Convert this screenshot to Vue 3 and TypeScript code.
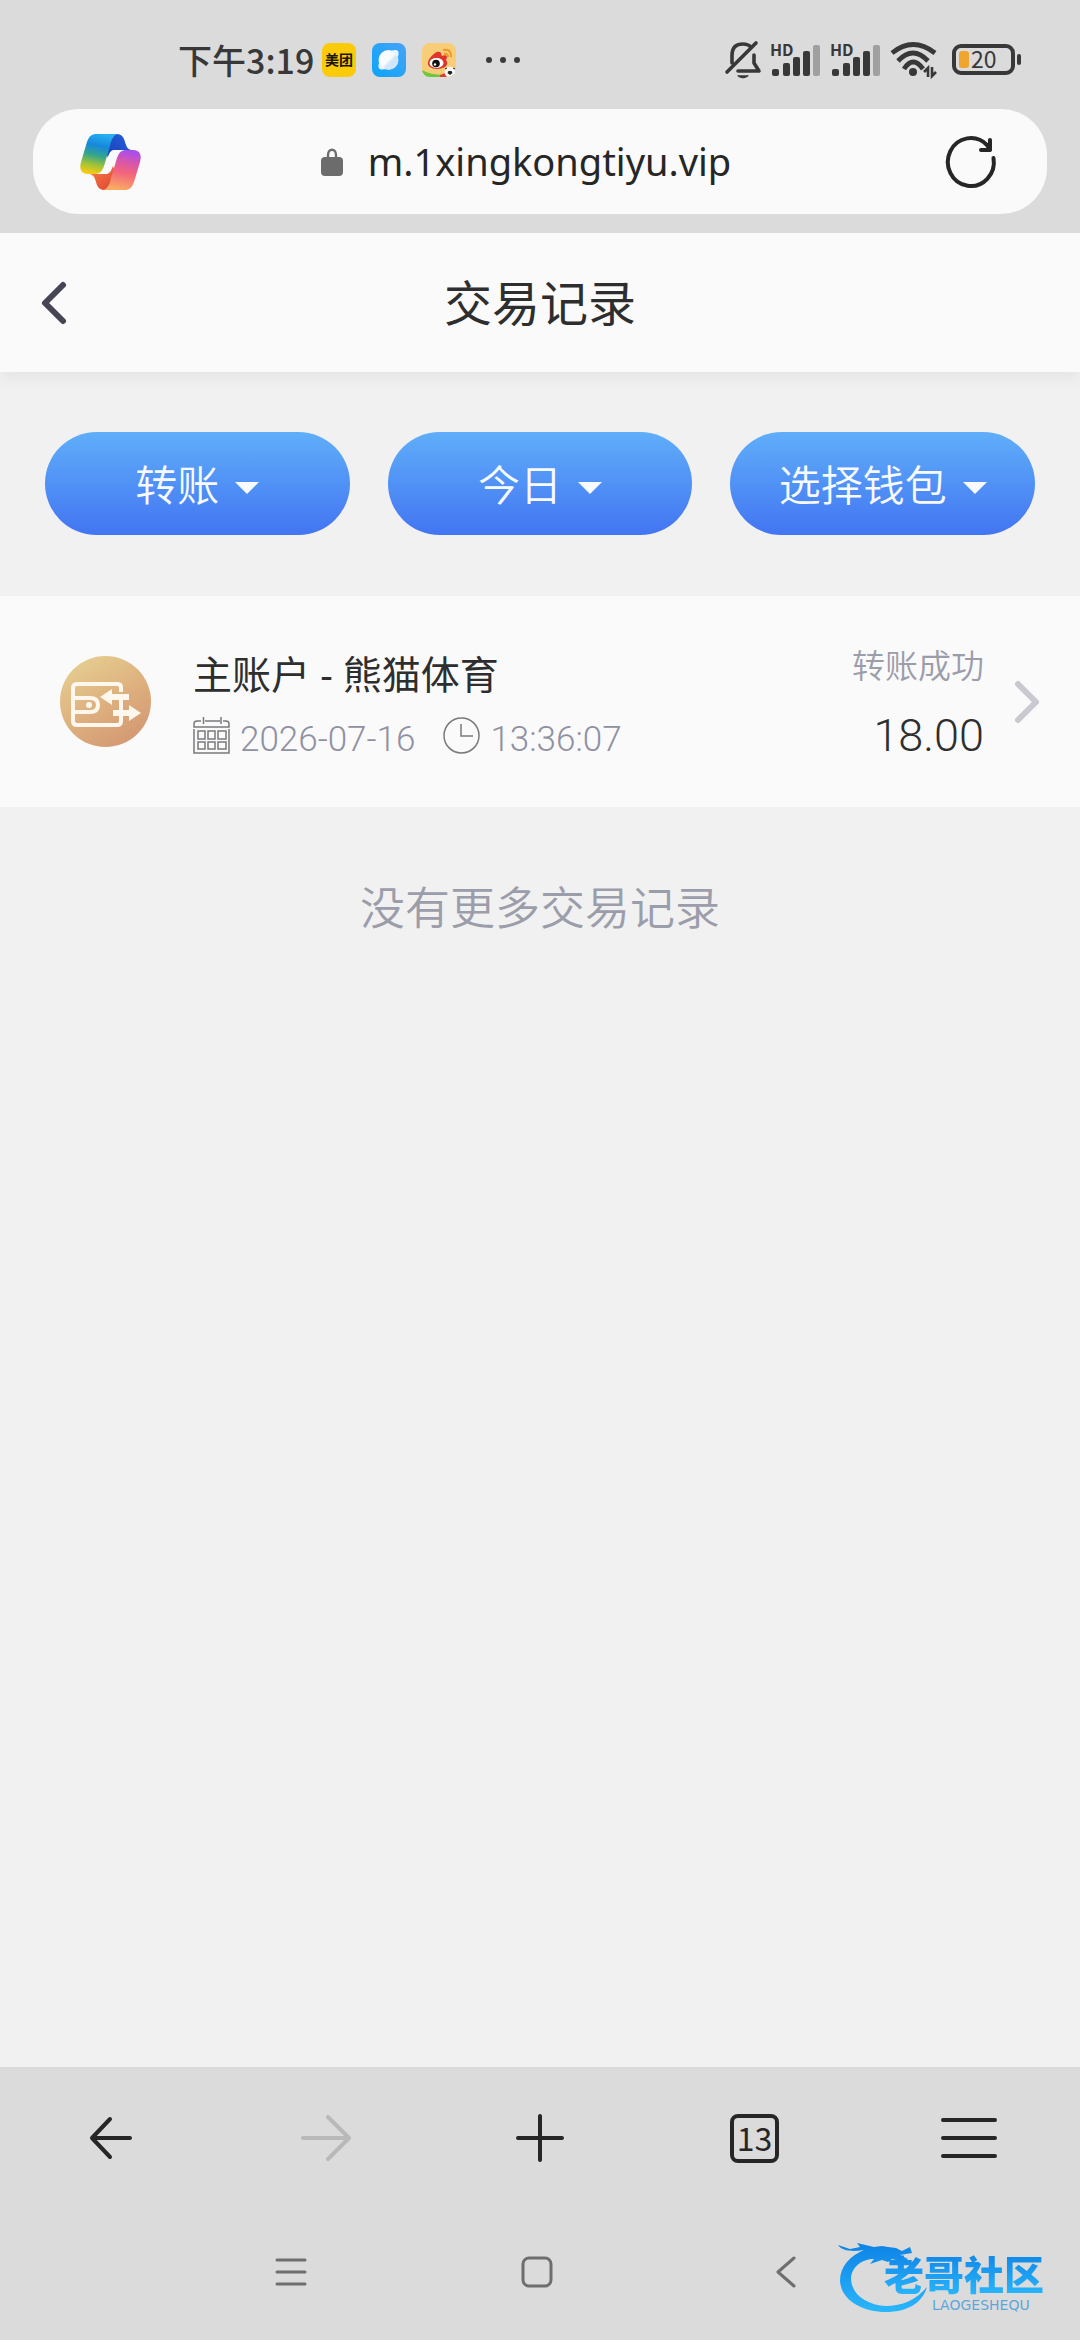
<script setup lang="ts">
import { ref } from 'vue'

interface Filter {
  id: string
  label: string
  options: string[]
  value: string
}

interface RecordItem {
  id: number
  title: string
  date: string
  time: string
  status: string
  amount: string
}

const address = ref('m.1xingkongtiyu.vip')
const tabCount = ref(13)

const filters = ref<Filter[]>([
  { id: 'type', label: '交易类型', options: ['转账', '存款', '取款'], value: '转账' },
  { id: 'day', label: '日期', options: ['今日', '昨日'], value: '今日' },
  { id: 'wallet', label: '钱包', options: ['选择钱包', '主账户'], value: '选择钱包' },
])

const records: RecordItem[] = [
  { id: 1, title: '主账户 - 熊猫体育', date: '2026-07-16', time: '13:36:07', status: '转账成功', amount: '18.00' },
]

const bars = [
  { x: 0, h: 7 },
  { x: 11, h: 13 },
  { x: 21, h: 19 },
  { x: 31, h: 25 },
  { x: 41, h: 31 },
]
</script>

<template>
  <div class="screen">
    <div class="status-bar">
      <div class="status-left">
        <span class="clock">下午3:19</span>
        <svg class="app-icon" viewBox="0 0 34 34">
          <rect width="34" height="34" rx="8" fill="#fbcb0a" />
          <text x="17" y="22" text-anchor="middle" font-size="14" font-weight="700" fill="#1a1505">美团</text>
        </svg>
        <svg class="app-icon" viewBox="0 0 34 34">
          <defs>
            <linearGradient id="qb" x1="1" y1="0" x2="0" y2="1">
              <stop offset="0" stop-color="#47a3f8" />
              <stop offset="1" stop-color="#0aa5f8" />
            </linearGradient>
            <linearGradient id="qbw" x1="0" y1="0" x2="1" y2="1">
              <stop offset="0.5" stop-color="#f9fcff" />
              <stop offset="0.6" stop-color="#d3e5f8" />
            </linearGradient>
          </defs>
          <rect width="34" height="34" rx="8" fill="url(#qb)" />
          <circle cx="16.500" cy="17" r="10" fill="url(#qbw)" />
          <path d="M7 20C5 27 9 27 14 26ZM19 8C25 6 28 7 26 14Z" fill="#eaf4ff" />
        </svg>
        <svg class="app-icon" viewBox="0 0 34 34">
          <defs><clipPath id="wb"><rect width="34" height="34" rx="8" /></clipPath></defs>
          <g clip-path="url(#wb)">
            <rect width="34" height="34" fill="#f8cd77" />
            <path d="M0 27Q12 34 34 31V34H0Z" fill="#6fc83c" />
            <path d="M18 32l8-3v5h-8z" fill="#d8402f" />
            <path d="M15 9C20 8 19 12 20 13C25 11 26 14 24 17C28 22 22 26 15 26C9 26 5 23 6 19C7 15 12 10 15 9Z" fill="#e0342c" />
            <ellipse cx="14.500" cy="20" rx="7" ry="5" fill="#fff" />
            <circle cx="14" cy="20.500" r="3.800" fill="#111" />
            <circle cx="13" cy="21.500" r="1.200" fill="#fff" />
            <path d="M21 7Q29 5 29 14M22 11Q26 10 26 14" fill="none" stroke="#ee982b" stroke-width="2" />
            <circle cx="28" cy="29" r="5.500" fill="#f7f7f7" />
            <path d="M26.500 28h3l1 2-2.500 2-2.500-2z" fill="#222" />
            <path d="M23 26l2-1M31 25l2 1" stroke="#222" />
          </g>
        </svg>
        <svg class="more" viewBox="0 0 34 8" fill="#3c3c3c">
          <circle cx="3" cy="4" r="3" /><circle cx="17" cy="4" r="3" /><circle cx="31" cy="4" r="3" />
        </svg>
      </div>
      <div class="status-right">
        <svg class="bell" viewBox="0 0 36 38" fill="none" stroke="#383838" stroke-width="3.600" stroke-linecap="round" stroke-linejoin="round">
          <path d="M7 22V15C7 6 11 3 18 3C21 3 24 4 26 6M29 14V22L34 30H13M2 31L31 2" />
          <path d="M13 35Q18 39 23 35Z" fill="#383838" stroke-width="1" />
        </svg>
        <svg v-for="n in 2" :key="n" class="signal" viewBox="0 0 52 36">
          <text x="0" y="14" font-size="16" font-weight="700" fill="#383838">HD</text>
          <rect v-for="(b, i) in bars" :key="b.x" :x="b.x + 2" :y="34 - b.h" width="7" :height="b.h" rx="2" :fill="i === 4 ? '#a0a0a0' : '#383838'" />
        </svg>
        <svg class="wifi" viewBox="0 0 48 38" fill="none" stroke="#383838" stroke-width="4.800">
          <path d="M2 12Q23 -5 45 12M8 20Q23 4 38 20M14 28Q23 14 33 28" />
          <circle cx="23" cy="31" r="4" fill="#383838" stroke="none" />
          <path d="M38 36V27L34 31M42 26V35L46 31" stroke-width="2.600" />
        </svg>
        <svg class="battery" viewBox="0 0 70 32">
          <rect x="2" y="2" width="59" height="27" rx="7" fill="none" stroke="#383838" stroke-width="4" />
          <rect x="65" y="10" width="4" height="11" rx="2" fill="#383838" />
          <rect x="7" y="7" width="10" height="17" rx="3" fill="#efa52e" />
          <text x="19" y="24" font-size="23" fill="#383838">20</text>
        </svg>
      </div>
    </div>

    <div class="address-wrap">
      <div class="address-bar">
        <button class="icon-button" aria-label="Copilot">
          <svg class="copilot" viewBox="0 0 61 56">
            <defs>
              <linearGradient id="cpa" x1="0.600" y1="0" x2="0.400" y2="1">
                <stop offset="0" stop-color="#27b0ee" />
                <stop offset="0.300" stop-color="#1688dc" />
                <stop offset="0.550" stop-color="#35a58c" />
                <stop offset="0.780" stop-color="#9cc239" />
                <stop offset="1" stop-color="#f6cb13" />
              </linearGradient>
              <linearGradient id="cpb" x1="0.400" y1="1" x2="0.600" y2="0">
                <stop offset="0" stop-color="#fbac62" />
                <stop offset="0.450" stop-color="#f2647c" />
                <stop offset="0.700" stop-color="#d957a8" />
                <stop offset="1" stop-color="#a94df0" />
              </linearGradient>
              <linearGradient id="cpc" x1="0" y1="1" x2="1" y2="0">
                <stop offset="0" stop-color="#1a3db4" /><stop offset="1" stop-color="#2462de" />
              </linearGradient>
              <linearGradient id="cpd" x1="0" y1="0" x2="1" y2="1">
                <stop offset="0" stop-color="#f9803f" /><stop offset="1" stop-color="#dd4338" />
              </linearGradient>
            </defs>
            <path d="M30 0H37C42 0 44 4 45 8L46 11C47 14 49 16 53 16H36C31 16 30 19 28 24L24 12Z" fill="url(#cpc)" />
            <path d="M31 56H24C19 56 17 52 16 48L15 45C14 42 12 40 8 40H25C30 40 31 37 33 32L37 44Z" fill="url(#cpd)" />
            <path d="M16 0H38C33 1 31 7 30 12L24 32C22 38 19 40 15 40H8C1 40-1 35 1 28L7 8C9 2 12 0 16 0Z" fill="url(#cpa)" />
            <path d="M45 56H23C28 55 30 49 31 44L37 24C39 18 42 16 46 16H53C60 16 62 21 60 28L54 48C52 54 49 56 45 56Z" fill="url(#cpb)" />
            <path d="M34 16H39C36 18 35 20 34 24L31 34C30 38 28 40 25 40H21C23 39 24 36 25 33L28 23C29 19 31 16 34 16Z" fill="#fafafa" />
          </svg>
        </button>
        <label class="address">
          <svg class="lock" viewBox="0 0 22 28">
            <path d="M7 11V7C7 0 15 0 15 7V11" fill="none" stroke="#6c6c6c" stroke-width="2.400" />
            <rect y="9" width="22" height="19" rx="4" fill="#6c6c6c" />
          </svg>
          <input v-model="address" class="address-input" type="text" aria-label="网址" />
        </label>
        <button class="icon-button" aria-label="刷新">
          <svg class="reload" viewBox="0 0 52 52" fill="none" stroke="#262626" stroke-width="4" stroke-linecap="round" stroke-linejoin="round">
            <path d="M48.500 22A23 24 0 1 1 42 9L45 14M45 4V14H36" />
          </svg>
        </button>
      </div>
    </div>

    <header class="page-header">
      <button class="back icon-button" aria-label="返回">
        <svg viewBox="0 0 26 44" fill="none" stroke="#464553" stroke-width="6" stroke-linecap="round" stroke-linejoin="round">
          <path d="M22 4L4 22L22 40" />
        </svg>
      </button>
      <h1>交易记录</h1>
    </header>

    <main class="content">
      <div class="filters">
        <label v-for="f in filters" :key="f.id" class="pill">
          <select v-model="f.value" :aria-label="f.label">
            <option v-for="o in f.options" :key="o" :value="o">{{ o }}</option>
          </select>
          <svg class="caret" viewBox="0 0 24 12"><path d="M0 0H24L12 12Z" fill="#f7faff" /></svg>
        </label>
      </div>

      <ul class="records">
        <li v-for="r in records" :key="r.id">
          <a class="record" href="#record">
            <svg class="wallet" viewBox="0 0 91 91">
              <defs>
                <linearGradient id="wl" x1="0.200" y1="0" x2="0.800" y2="1">
                  <stop offset="0" stop-color="#e5cf92" />
                  <stop offset="0.500" stop-color="#deb17e" />
                  <stop offset="1" stop-color="#d29672" />
                </linearGradient>
              </defs>
              <circle cx="45.500" cy="45.500" r="45.500" fill="url(#wl)" />
              <g fill="none" stroke="#fdf7ee" stroke-width="4" stroke-linejoin="round">
                <path d="M61 36V31Q61 28 57 28H17Q13 28 13 32V65Q13 69 17 69H57Q61 69 61 65V44" />
                <path d="M13 42H30Q38 42 38 49T30 56H13" />
              </g>
              <circle cx="29" cy="49" r="3" fill="#fdf7ee" />
              <path d="M40 41L52 33V38H69V44H52V49ZM81 57L69 49V54H53V60H69V65Z" fill="#fdf7ee" />
            </svg>
            <div class="record-main">
              <span class="record-title">{{ r.title }}</span>
              <span class="record-meta">
                <svg class="meta-icon" viewBox="0 0 37 37" fill="none" stroke="#7a7a7e" stroke-width="1.500">
                  <path d="M8 4H4Q1 4 1 7V10H36V7Q36 4 33 4H30M12 4H27M10.500 0V7M28 0V7M1 12V36H36V12" />
                  <path d="M5 14H12V22H5ZM15 14H22V22H15ZM25 14H33V22H25ZM5 25H12V32H5ZM15 25H22V32H15ZM25 25H33V32H25Z" />
                </svg>
                <span class="date">{{ r.date }}</span>
                <svg class="meta-icon" viewBox="0 0 37 37" fill="none" stroke="#7a7a7e" stroke-width="1.500">
                  <circle cx="18.500" cy="18.500" r="17.500" /><path d="M18 7V19H30" />
                </svg>
                <span class="time">{{ r.time }}</span>
              </span>
            </div>
            <div class="record-side">
              <span class="record-status">{{ r.status }}</span>
              <span class="record-amount">{{ r.amount }}</span>
            </div>
            <svg class="chevron" viewBox="0 0 26 44" fill="none" stroke="#c9c9d2" stroke-width="6" stroke-linecap="round" stroke-linejoin="round">
              <path d="M4 4L22 22L4 40" />
            </svg>
          </a>
        </li>
      </ul>

      <p class="empty">没有更多交易记录</p>
    </main>

    <footer class="bottom">
      <nav class="toolbar">
        <button class="tool" aria-label="后退">
          <svg width="44" height="42" viewBox="0 0 44 42" fill="none" stroke="#262626" stroke-width="4" stroke-linecap="round" stroke-linejoin="round"><path d="M21 2L3 21L21 40M4 21H41" /></svg>
        </button>
        <button class="tool" aria-label="前进" disabled>
          <svg width="50" height="46" viewBox="0 0 50 46" fill="none" stroke="#b9b9b9" stroke-width="4" stroke-linecap="round" stroke-linejoin="round"><path d="M27 2L48 23L27 44M47 23H2" /></svg>
        </button>
        <button class="tool" aria-label="新标签页">
          <svg width="48" height="48" viewBox="0 0 48 48" stroke="#262626" stroke-width="4" stroke-linecap="round"><path d="M24 2V46M2 24H46" /></svg>
        </button>
        <button class="tool" aria-label="标签页"><span class="tabs">{{ tabCount }}</span></button>
        <button class="tool" aria-label="菜单">
          <svg width="56" height="40" viewBox="0 0 56 40" stroke="#262626" stroke-width="4" stroke-linecap="round"><path d="M2 2H54M2 20H54M2 38H54" /></svg>
        </button>
      </nav>
      <nav class="system-nav">
        <button class="sys" aria-label="最近任务">
          <svg width="32" height="32" viewBox="0 0 32 32" stroke="#6e6e6e" stroke-width="3" stroke-linecap="round"><path d="M2 4H30M2 16H30M2 28H30" /></svg>
        </button>
        <button class="sys" aria-label="主屏幕">
          <svg width="32" height="32" viewBox="0 0 32 32" fill="none" stroke="#6e6e6e" stroke-width="3"><rect x="2" y="2" width="28" height="28" rx="6" /></svg>
        </button>
        <button class="sys" aria-label="返回上一页">
          <svg width="32" height="32" viewBox="0 0 32 32" fill="none" stroke="#6e6e6e" stroke-width="3" stroke-linecap="round" stroke-linejoin="round"><path d="M27 2L11 16L27 30" /></svg>
        </button>
      </nav>
      <div class="watermark">
        <svg class="dragon" viewBox="0 0 92 72">
          <defs>
            <linearGradient id="dg" x1="0" y1="0" x2="0" y2="1">
              <stop offset="0" stop-color="#0d83e6" /><stop offset="1" stop-color="#2ab6fb" />
            </linearGradient>
          </defs>
          <path d="M26 8C12 14 2 24 2 39C3 58 24 70 48 70C68 70 84 62 89 45C78 58 64 64 48 64C28 63 13 52 13 36C14 24 25 17 36 17L32 22L44 18L50 20L54 17L66 20L70 17L62 13L74 11L72 5L64 9L58 6L50 5L44 4L36 5L19 1L22 5L12 7L0 3C4 9 14 10 26 8Z" fill="url(#dg)" />
        </svg>
        <div class="mark-text">
          <span class="mark-name">老哥社区</span>
          <span class="mark-latin">LAOGESHEQU</span>
        </div>
      </div>
    </footer>
  </div>
</template>

<style>
body {
  background: #dbdbdb;
}
</style>

<style scoped>
* {
  box-sizing: border-box;
}
.screen {
  min-height: 100vh;
  display: flex;
  flex-direction: column;
  background: #dbdbdb;
  color: #2e2e2e;
  font-family: "Noto Sans CJK SC", sans-serif;
}
svg {
  display: block;
  flex: none;
  overflow: visible;
}
button {
  border: 0;
  padding: 0;
  background: none;
  display: flex;
  align-items: center;
  justify-content: center;
}
.status-bar {
  height: 109px;
  padding: 10px 58px 0 178px;
  display: flex;
  justify-content: space-between;
  align-items: center;
}
.status-left {
  display: flex;
  align-items: center;
  gap: 16px;
}
.clock {
  font-size: 34px;
  font-weight: 500;
  line-height: 40px;
  color: #383838;
  margin-right: -8px;
}
.app-icon {
  width: 34px;
  height: 34px;
}
.more {
  width: 34px;
  height: 8px;
  margin-left: 14px;
}
.status-right {
  display: flex;
  align-items: center;
}
.bell {
  width: 36px;
  height: 38px;
  margin-right: 9px;
}
.signal {
  width: 52px;
  height: 36px;
  margin-right: 8px;
}
.wifi {
  width: 48px;
  height: 38px;
  margin-right: 14px;
}
.battery {
  width: 70px;
  height: 32px;
}
.address-wrap {
  padding: 0 33px 19px;
}
.address-bar {
  height: 105px;
  padding: 0 50px 0 47px;
  border-radius: 46px;
  background: #fafafa;
  display: flex;
  align-items: center;
}
.copilot {
  width: 61px;
  height: 56px;
}
.reload {
  width: 52px;
  height: 52px;
}
.address {
  flex: 1;
  padding-right: 34px;
  display: flex;
  align-items: center;
  justify-content: center;
  gap: 25px;
}
.lock {
  width: 22px;
  height: 28px;
}
.address-input {
  field-sizing: content;
  border: 0;
  padding: 0 0 2px;
  outline: 0;
  background: none;
  font-family: "Noto Sans", sans-serif;
  font-size: 38px;
  line-height: 54px;
  color: #262626;
}
.page-header {
  position: relative;
  height: 139px;
  padding: 0 40px;
  background: #fafafa;
  box-shadow: 0 6px 16px rgba(0, 0, 0, 0.06);
  clip-path: inset(0 0 -30px 0);
  display: grid;
  grid-template-columns: 1fr auto 1fr;
  align-items: center;
}
.back {
  justify-self: start;
}
.back svg {
  width: 28px;
  height: 44px;
}
h1 {
  margin: 0;
  padding-bottom: 6px;
  font-size: 48px;
  font-weight: 400;
  line-height: 64px;
}
.content {
  flex: 1;
  background: #f1f1f1;
}
.filters {
  display: grid;
  grid-template-columns: repeat(3, 1fr);
  gap: 38px;
  padding: 60px 45px 61px;
}
.pill {
  height: 103px;
  padding-bottom: 2px;
  border-radius: 52px;
  background: linear-gradient(#60aefa, #4275f2);
  display: flex;
  align-items: center;
  justify-content: center;
  gap: 16px;
}
.pill select {
  appearance: none;
  field-sizing: content;
  border: 0;
  padding: 0;
  background: none;
  color: #f7faff;
  font-family: inherit;
  font-size: 42px;
  font-weight: 350;
  line-height: 60px;
}
.caret {
  width: 24px;
  height: 12px;
  margin-top: 10px;
}
.records {
  list-style: none;
  margin: 0;
  padding: 0;
}
.record {
  height: 211px;
  padding: 0 40px 0 60px;
  background: #fafafa;
  color: inherit;
  text-decoration: none;
  display: flex;
  align-items: center;
}
.wallet {
  width: 91px;
  height: 91px;
}
.record-main {
  flex: 1;
  margin-left: 42px;
  padding-top: 6px;
  display: flex;
  flex-direction: column;
  gap: 10px;
}
.record-title {
  font-family: "Noto Sans", "Noto Sans CJK SC", sans-serif;
  font-size: 39px;
  line-height: 52px;
}
.record-meta {
  display: flex;
  align-items: center;
  gap: 10px;
  font-family: Roboto, sans-serif;
  font-size: 35px;
  font-weight: 300;
  line-height: 44px;
  color: #8f91a2;
}
.meta-icon {
  width: 37px;
  height: 37px;
}
.date,
.time {
  padding-top: 8px;
}
.date {
  margin-right: 18px;
}
.record-side {
  display: flex;
  flex-direction: column;
  align-items: flex-end;
  gap: 24px;
}
.record-status {
  font-size: 33px;
  font-weight: 350;
  line-height: 44px;
  color: #9c9daa;
}
.record-amount {
  font-family: Roboto, sans-serif;
  font-size: 45px;
  font-weight: 300;
  line-height: 52px;
}
.chevron {
  width: 26px;
  height: 44px;
  margin-left: 30px;
}
.empty {
  margin: 66px 0 0;
  text-align: center;
  font-size: 45px;
  font-weight: 350;
  line-height: 66px;
  color: #9c9daa;
}
.bottom {
  position: relative;
}
.toolbar {
  height: 142px;
  padding: 0 4px;
  display: grid;
  grid-template-columns: repeat(5, 1fr);
}
.tabs {
  width: 49px;
  height: 49px;
  padding-bottom: 2px;
  border: 4px solid #262626;
  border-radius: 8px;
  display: flex;
  align-items: center;
  justify-content: center;
  font-family: "Noto Sans CJK SC", sans-serif;
  font-size: 32px;
  line-height: 40px;
  color: #262626;
}
.system-nav {
  height: 131px;
  padding: 0 6px 6px 0;
  display: flex;
  align-items: center;
  justify-content: center;
  gap: 214px;
}
.watermark {
  position: absolute;
  right: 20px;
  bottom: 26px;
  display: flex;
}
.dragon {
  width: 92px;
  height: 72px;
}
.mark-text {
  display: flex;
  flex-direction: column;
  gap: 2px;
  margin: 8px 0 0 -46px;
}
.mark-name {
  width: 176px;
  font-size: 40px;
  font-weight: 900;
  line-height: 46px;
  background: linear-gradient(#0d83e6, #2ab6fb);
  background-clip: text;
  color: transparent;
}
.mark-latin {
  margin-left: 48px;
  font-family: "DejaVu Sans", sans-serif;
  font-size: 14px;
  line-height: 14px;
  color: #5ba7dc;
}
</style>
